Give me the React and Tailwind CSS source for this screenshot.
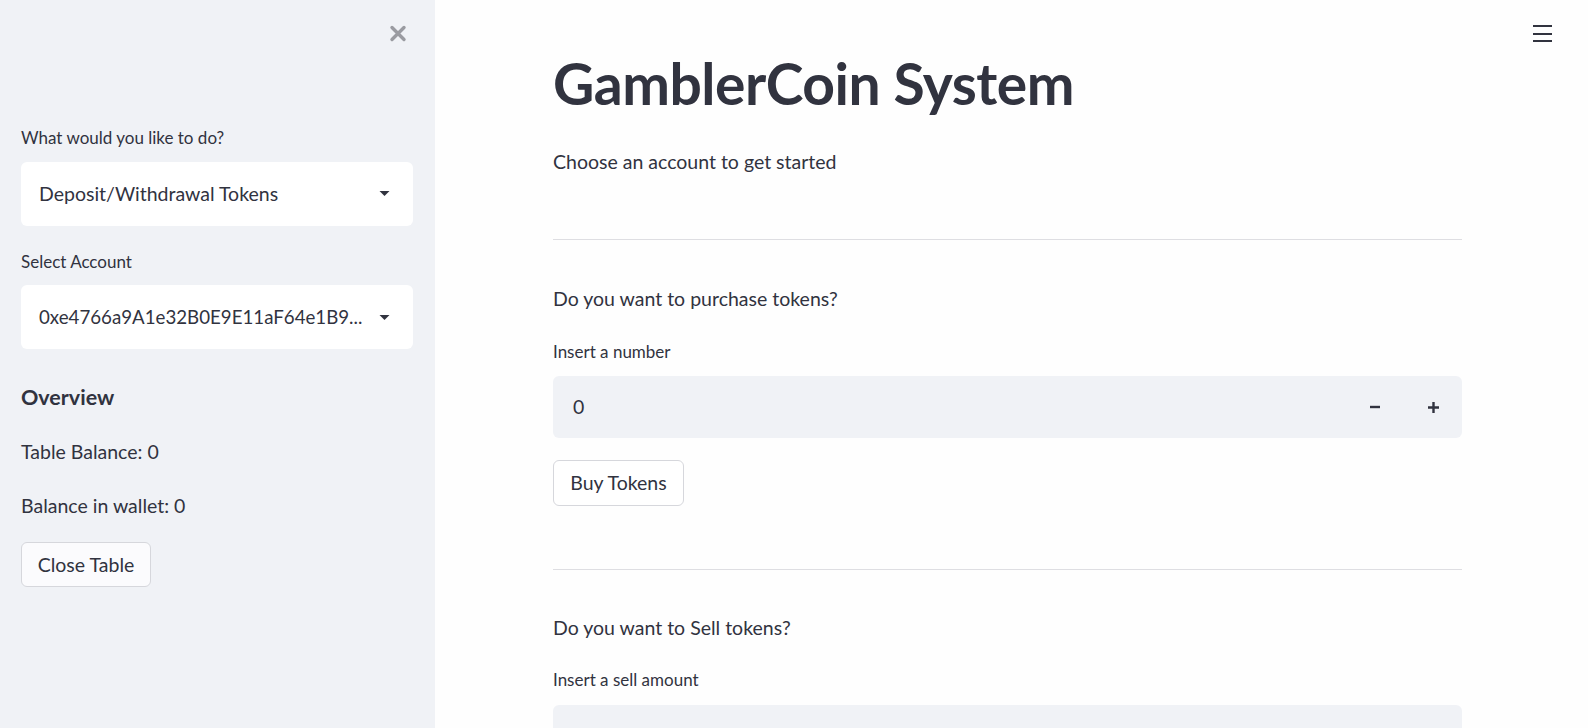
import React from 'react';

const font = { fontFamily: '"Lato", "Noto Sans", sans-serif' };

function Caret() {
  return (
    <svg width="11" height="7" viewBox="0 0 11 7" className="shrink-0">
      <path d="M0.5 1h10L5.5 6z" fill="#31333F" />
    </svg>
  );
}

function SelectBox({ value, small }) {
  return (
    <div className="flex items-center justify-between h-[64px] bg-white rounded-md pl-[18px] pr-[23px]">
      <span className={small ? 'text-[18.7px] text-[#31333F] whitespace-nowrap pr-4' : 'text-[19.5px] text-[#31333F] whitespace-nowrap pr-4'}>
        {value}
      </span>
      <Caret />
    </div>
  );
}

function Sidebar() {
  return (
    <aside className="w-[435px] shrink-0 bg-[#f0f2f6] h-screen pl-[21px] pr-[22px] flex flex-col">
      <div className="flex justify-end pt-[25px] pr-[6px]">
        <svg width="18" height="17" viewBox="0 0 18 17">
          <path d="M3 2.5l12 12M15 2.5l-12 12" stroke="#9a9ba1" strokeWidth="3.4" strokeLinecap="round" />
        </svg>
      </div>
      <div className="mt-[83px] text-[17px] text-[#31333F]">What would you like to do?</div>
      <div className="mt-[11px]">
        <SelectBox value="Deposit/Withdrawal Tokens" />
      </div>
      <div className="mt-[23px] text-[17px] text-[#31333F]">Select Account</div>
      <div className="mt-[11px]">
        <SelectBox value="0xe4766a9A1e32B0E9E11aF64e1B9..." small />
      </div>
      <div className="mt-[32px] text-[21.5px] font-bold text-[#31333F]">Overview</div>
      <div className="mt-[24px] text-[19.5px] text-[#31333F]">Table Balance: 0</div>
      <div className="mt-[24px] text-[19.5px] text-[#31333F]">Balance in wallet: 0</div>
      <div className="mt-[22px]">
        <button className="h-[45px] w-[130px] bg-[#fbfbfd] border border-[#d6d7dc] rounded-md text-[19.5px] text-[#31333F]">
          Close Table
        </button>
      </div>
    </aside>
  );
}

function NumberInput({ value }) {
  return (
    <div className="flex items-center h-[62px] bg-[#f0f2f6] rounded-md pl-5">
      <span className="flex-1 text-[19.5px] text-[#31333F]">{value}</span>
      <div className="flex items-center h-full">
        <span className="w-[58px] h-full flex items-center justify-center">
          <svg width="12" height="12" viewBox="0 0 12 12"><path d="M1 6h10" stroke="#31333F" strokeWidth="2.4" /></svg>
        </span>
        <span className="w-[58px] h-full flex items-center justify-center">
          <svg width="13" height="13" viewBox="0 0 13 13"><path d="M1 6.5h11M6.5 1v11" stroke="#31333F" strokeWidth="2.4" /></svg>
        </span>
      </div>
    </div>
  );
}

export default function App() {
  return (
    <div className="flex w-full h-screen overflow-hidden bg-[#fefefe]" style={font}>
      <Sidebar />
      <main className="flex-1 relative">
        <div className="absolute right-[36px] top-[25px] flex flex-col gap-[5.5px]">
          <span className="block w-[19px] h-[2px] bg-[#31333F]" />
          <span className="block w-[19px] h-[2px] bg-[#31333F]" />
          <span className="block w-[19px] h-[2px] bg-[#31333F]" />
        </div>
        <div className="ml-[118px] w-[909px] flex flex-col text-[#31333F]">
          <h1 className="mt-[48px] text-[57px] leading-[70px] font-bold tracking-[-0.5px]">GamblerCoin System</h1>
          <p className="mt-[29px] text-[19.5px]">Choose an account to get started</p>
          <hr className="mt-[63px] border-0 h-px bg-[#dedee2]" />
          <p className="mt-[44px] text-[19.5px]">Do you want to purchase tokens?</p>
          <div className="mt-[25px] text-[17px]">Insert a number</div>
          <div className="mt-[12px]">
            <NumberInput value="0" />
          </div>
          <div className="mt-[22px]">
            <button className="h-[46px] w-[131px] bg-white border border-[#d6d7dc] rounded-md text-[19.5px] text-[#31333F]">
              Buy Tokens
            </button>
          </div>
          <hr className="mt-[63px] border-0 h-px bg-[#dedee2]" />
          <p className="mt-[43px] text-[19.5px]">Do you want to Sell tokens?</p>
          <div className="mt-[25px] text-[17px]">Insert a sell amount</div>
          <div className="mt-[12px]">
            <NumberInput value="" />
          </div>
        </div>
      </main>
    </div>
  );
}
